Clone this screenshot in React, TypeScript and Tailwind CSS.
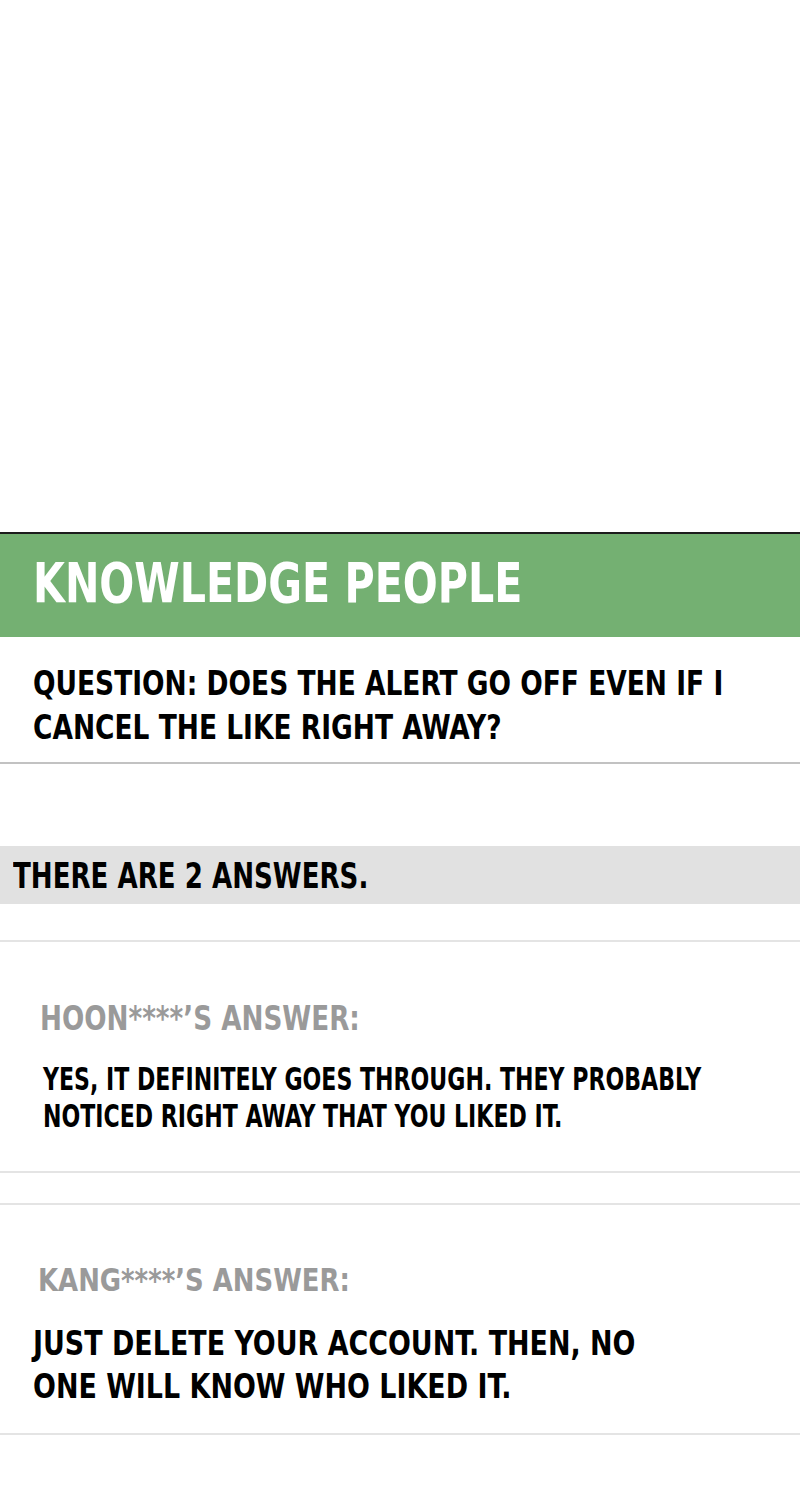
import React from "react";

const comic = {
  fontFamily: '"DejaVu Sans Condensed", "DejaVu Sans", sans-serif',
};

// Hand-lettered look: a bold condensed face squeezed a little further sideways.
function Lettering({
  children,
  className,
}: {
  children: React.ReactNode;
  className: string;
}) {
  return (
    <div className={`origin-top-left whitespace-nowrap font-bold ${className}`} style={comic}>
      {children}
    </div>
  );
}

export default function App() {
  return (
    <div className="flex h-[1500px] w-[800px] flex-col overflow-hidden bg-white">
      {/* blank panel above the board */}
      <div className="h-[532px] shrink-0" />

      {/* board header */}
      <div className="shrink-0 border-t-2 border-[#1c1c1c]" />
      <div className="flex h-[103px] shrink-0 items-start bg-[#74b072] pl-[33px] pt-[21px]">
        <Lettering className="scale-x-[0.817] text-[56px] leading-none text-white">
          KNOWLEDGE PEOPLE
        </Lettering>
      </div>

      {/* question */}
      <div className="h-[127px] shrink-0 border-b-2 border-[#c2c2c2] pl-[33px] pt-[25px]">
        <Lettering className="scale-x-[0.892] text-[33px] leading-[44px] text-black">
          QUESTION: DOES THE ALERT GO OFF EVEN IF I
          <br />
          CANCEL THE LIKE RIGHT AWAY?
        </Lettering>
      </div>

      <div className="h-[82px] shrink-0" />

      {/* answer count */}
      <div className="flex h-[58px] shrink-0 items-start bg-[#e1e1e1] pl-[13px] pt-[12px]">
        <Lettering className="scale-x-[0.806] text-[36px] leading-none text-black">
          THERE ARE 2 ANSWERS.
        </Lettering>
      </div>

      <div className="h-[36px] shrink-0" />

      {/* first answer */}
      <div className="h-[231px] shrink-0 border-t-2 border-[#e4e4e4] pl-[40px] pt-[59px]">
        <Lettering className="scale-x-[0.857] text-[34px] leading-none text-[#9a9a9a]">
          HOON****’S ANSWER:
        </Lettering>
        <div className="mt-[26px] pl-[3px]">
          <Lettering className="scale-x-[0.767] text-[32px] leading-[37px] text-black">
            YES, IT DEFINITELY GOES THROUGH. THEY PROBABLY
            <br />
            NOTICED RIGHT AWAY THAT YOU LIKED IT.
          </Lettering>
        </div>
      </div>

      <div className="h-[32px] shrink-0 border-t-2 border-[#e4e4e4]" />

      {/* second answer */}
      <div className="h-[232px] shrink-0 border-y-2 border-[#e4e4e4] pl-[38px] pt-[59px]">
        <Lettering className="scale-x-[0.9] text-[32px] leading-none text-[#9a9a9a]">
          KANG****’S ANSWER:
        </Lettering>
        <div className="mt-[26px] -ml-[5px]">
          <Lettering className="scale-x-[0.88] text-[34px] leading-[43px] text-black">
            JUST DELETE YOUR ACCOUNT. THEN, NO
            <br />
            ONE WILL KNOW WHO LIKED IT.
          </Lettering>
        </div>
      </div>

      <div className="flex-1" />
    </div>
  );
}
